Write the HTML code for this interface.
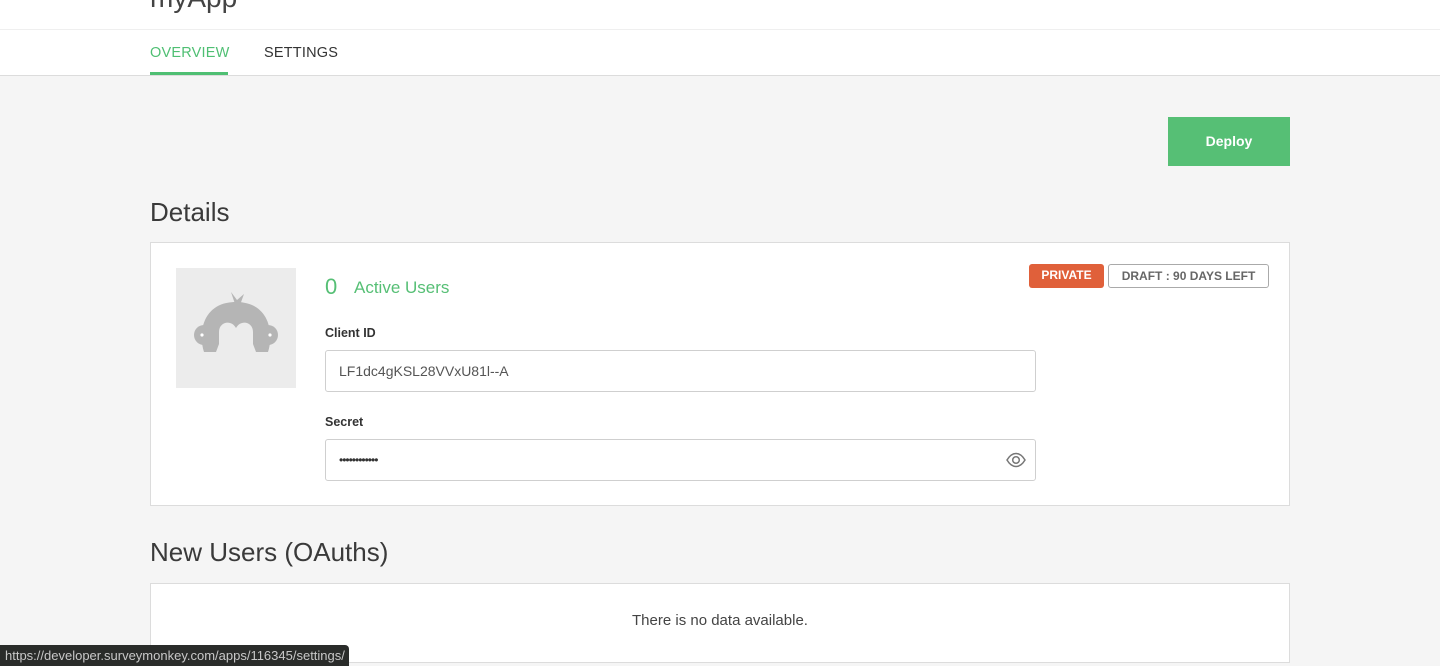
<!DOCTYPE html>
<html><head><style>
*{box-sizing:border-box;margin:0;padding:0}
body{width:1440px;height:666px;overflow:hidden;background:#f5f5f5;font-family:"Liberation Sans",sans-serif;position:relative;color:#333}
.hdr{position:absolute;left:0;top:0;width:1440px;height:76px;background:#fff;border-bottom:1px solid #dcdcdc}
.hdr .t{position:absolute;left:150px;top:-18px;font-size:28px;color:#444}
.hdr .line{position:absolute;left:0;top:29px;width:1440px;height:1px;background:#efefef}
.tab{position:absolute;top:45px;font-size:14.5px;letter-spacing:.2px}
.ul{position:absolute;left:150px;top:72px;width:78px;height:3px;background:#4fbf73}
.btn{position:absolute;left:1168px;top:117px;width:122px;height:49px;background:#56bf75;color:#fff;font-weight:bold;font-size:14px;text-align:center;line-height:49px}
h2{position:absolute;left:150px;font-weight:normal;font-size:26px;color:#3a3a3a}
.card{position:absolute;left:150px;width:1140px;background:#fff;border:1px solid #dcdcdc}
.av{position:absolute;left:176px;top:268px;width:120px;height:120px;background:#ececec}
.lbl{position:absolute;left:325px;font-size:12.5px;font-weight:bold;color:#333}
.in{position:absolute;left:325px;width:711px;height:42px;border:1px solid #cfcfcf;border-radius:3px;font-size:14px;color:#555;padding-left:13px;line-height:40px}
.badge{position:absolute;top:264px;height:24px;font-size:12px;font-weight:bold;line-height:22px;text-align:center;border-radius:3px}
.tip{position:absolute;left:0;top:645px;width:349px;height:21px;background:#2a2c2a;border-radius:0 4px 0 0;color:#c8c8c8;font-size:13px;line-height:21px;padding-left:5px}
</style></head><body>
<div class="hdr"><div class="t">myApp</div><div class="line"></div>
<div class="tab" style="left:150px;color:#4fbf73">OVERVIEW</div>
<div class="tab" style="left:264px;color:#333">SETTINGS</div>
<div class="ul"></div></div>
<div class="btn">Deploy</div>
<h2 style="top:197px">Details</h2>
<div class="card" style="top:242px;height:264px"></div>
<div class="av"><svg width="120" height="120" viewBox="0 0 120 120">
<g fill="#b5b5b5">
<circle cx="28" cy="67" r="10"/><circle cx="92" cy="67" r="10"/>
<path fill-rule="evenodd" d="M28 84 C22 66 26 34 60 34 C94 34 98 66 92 84 L80 84 L77 76 L77 64 C77 54 65 51 60 60 C55 51 43 54 43 64 L43 76 L40 84 Z"/>
<path d="M59 36 L55 24 L61 32 L68 26 L64 37z"/></g>
<circle cx="26" cy="67" r="1.6" fill="#fff"/><circle cx="94" cy="67" r="1.6" fill="#fff"/></svg></div>
<div style="position:absolute;left:325px;top:274px;font-size:22px;color:#56bf75">0</div>
<div style="position:absolute;left:354px;top:278px;font-size:17px;color:#56bf75">Active Users</div>
<div class="lbl" style="top:326px">Client ID</div>
<div class="in" style="top:350px">LF1dc4gKSL28VVxU81l--A</div>
<div class="lbl" style="top:415px">Secret</div>
<div class="in" style="top:439px;color:#333;font-size:12px;letter-spacing:-1px">••••••••••••
<svg style="position:absolute;right:9px;top:12px" width="20" height="16" viewBox="0 0 20 16"><path d="M1 8C4 3 7 1.5 10 1.5S16 3 19 8C16 13 13 14.5 10 14.5S4 13 1 8z" fill="none" stroke="#777" stroke-width="1.5"/><circle cx="10" cy="8" r="3.3" fill="none" stroke="#777" stroke-width="1.5"/></svg></div>
<div class="badge" style="left:1029px;width:75px;background:#e0603a;color:#fff">PRIVATE</div>
<div class="badge" style="left:1108px;width:161px;border:1px solid #aaa;color:#666">DRAFT : 90 DAYS LEFT</div>
<h2 style="top:537px">New Users (OAuths)</h2>
<div class="card" style="top:583px;height:80px"><div style="text-align:center;margin-top:28px;font-size:15px;color:#444">There is no data available.</div></div>
<div class="tip">https://developer.surveymonkey.com/apps/116345/settings/</div>
</body></html>
